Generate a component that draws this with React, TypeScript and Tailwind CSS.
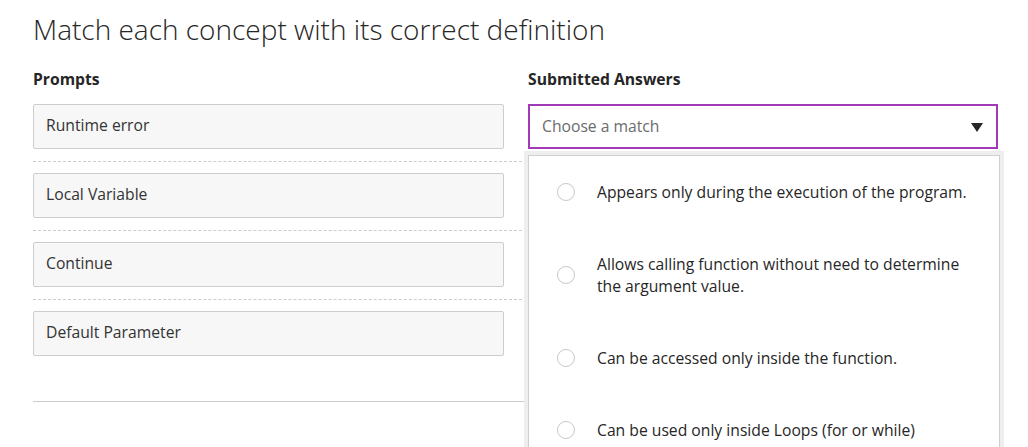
const prompts = ['Runtime error', 'Local Variable', 'Continue', 'Default Parameter'];

const answers = [
  'Appears only during the execution of the program.',
  'Allows calling function without need to determine the argument value.',
  'Can be accessed only inside the function.',
  'Can be used only inside Loops (for or while)',
];

function MatchSelect() {
  return (
    <div className="relative">
      <div className="flex h-[45px] items-center justify-between border-2 border-[#a23ab8] bg-white pl-[12px] pr-[13px]">
        <span className="text-[15.7px] text-[#6b6b6b]">Choose a match</span>
        <svg width="12" height="9" viewBox="0 0 12 9" className="mt-[1px]">
          <path d="M0 0 H12 L6 9 Z" fill="#262626" />
        </svg>
      </div>

      {/* open menu */}
      <div className="absolute left-0 top-[51px] z-10 w-[472px] border border-[#cfcfcf] bg-white shadow-[0_0_0_4px_#eeeeee]">
        {answers.map((a) => (
          <div key={a} className="flex items-center py-[25px] pl-[28px] pr-[22px]">
            <span className="h-[18px] w-[18px] shrink-0 rounded-full border border-[#c8c8c8] bg-white" />
            <span className="ml-[22px] text-[15.7px] leading-[22px] text-[#262626]">{a}</span>
          </div>
        ))}
      </div>
    </div>
  );
}

export default function App() {
  return (
    <div
      className="h-[447px] overflow-hidden bg-white pl-[33px] text-[#333]"
      style={{ fontFamily: '"Open Sans", sans-serif' }}
    >
      <h1 className="pt-[10px] text-[28px] font-light leading-[38px] text-[#262626]">
        Match each concept with its correct definition
      </h1>

      <div className="w-[965px]">
        <div className="mt-[21px] flex gap-[24px] text-[15.7px] font-bold leading-[20px] text-[#262626]">
          <div className="w-[471px]">Prompts</div>
          <div>Submitted Answers</div>
        </div>

        <div className="mt-[15px] border-b border-[#cccccc] pb-[45px]">
          {prompts.map((p, i) => (
            <div
              key={p}
              className={
                i < prompts.length - 1
                  ? 'flex gap-[24px] border-b border-dashed border-[#cccccc] pb-[12px] pt-[11px] first:pt-0'
                  : 'flex gap-[24px] pt-[11px]'
              }
            >
              <div className="flex h-[45px] w-[471px] items-center rounded-[2px] border border-[#cdcdcd] bg-[#f7f7f7] px-[12px] pb-[1px] text-[15.7px] text-[#333]">
                {p}
              </div>
              <div className="w-[470px]">{i === 0 && <MatchSelect />}</div>
            </div>
          ))}
        </div>
      </div>
    </div>
  );
}
